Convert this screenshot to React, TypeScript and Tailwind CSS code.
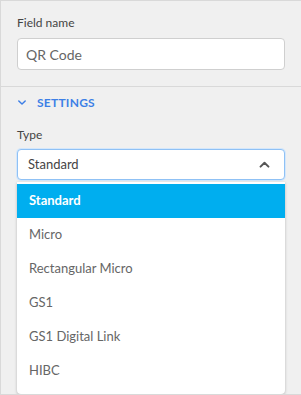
import React from 'react';

const options = ['Standard', 'Micro', 'Rectangular Micro', 'GS1', 'GS1 Digital Link', 'HIBC'];

const ChevronDown: React.FC<{ className?: string }> = ({ className }) => (
  <svg viewBox="0 0 10 6" className={className} fill="none" stroke="currentColor" strokeWidth="1.8" strokeLinecap="round" strokeLinejoin="round">
    <path d="M1 1l4 4 4-4" />
  </svg>
);

const ChevronUp: React.FC<{ className?: string }> = ({ className }) => (
  <svg viewBox="0 0 12 8" className={className} fill="none" stroke="currentColor" strokeWidth="2.2" strokeLinecap="round" strokeLinejoin="round">
    <path d="M1.5 6.5L6 2l4.5 4.5" />
  </svg>
);

const App: React.FC = () => {
  const selected = 'Standard';

  return (
    <div
      className="w-[301px] h-[395px] overflow-hidden bg-[#f0f0f0] border-l border-t border-b border-[#d9d9d9] text-[#4a4a4a]"
      style={{ fontFamily: 'Lato, "Open Sans", sans-serif' }}
    >
      {/* Field name */}
      <div className="pl-4 pr-4 pt-[14px] pb-4">
        <label className="block text-[12px] leading-4 text-[#444]">Field name</label>
        <div className="mt-[7px] h-[32px] w-[268px] rounded-[4px] border border-[#cfcfcf] bg-white flex items-center px-2">
          <span className="text-[14px] text-[#666]">QR Code</span>
        </div>
      </div>

      <div className="border-t border-[#d9d9d9]" />

      {/* Settings */}
      <div className="pl-4 pr-4">
        <div className="h-[31px] flex items-center gap-[7px]">
          <ChevronDown className="w-[8px] h-[5px] ml-[1px] text-[#3d7fe6]" />
          <span className="text-[12px] font-bold tracking-[0.02em] text-[#3d7fe6] ml-[4px]">SETTINGS</span>
        </div>

        <label className="block mt-[9px] text-[12px] leading-4 text-[#444]">Type</label>

        <div className="relative mt-[6px] w-[268px]">
          <div className="h-[31px] rounded-[4px] border border-[#8fc1f5] bg-white shadow-[0_0_0_1px_#d4e7fb] flex items-center justify-between pl-[10px] pr-[14px]">
            <span className="text-[13px] text-[#444]">Standard</span>
            <ChevronUp className="w-[11px] h-[7px] text-[#555]" />
          </div>

          <div className="mt-[2px] bg-white rounded-b-[4px] shadow-[0_1px_3px_rgba(0,0,0,0.25)] pt-[2px] pb-[6px]">
            {options.map((o) => (
              <div
                key={o}
                className={
                  o === selected
                    ? 'h-[34px] flex items-center px-3 bg-[#00aeef] text-white text-[13px] font-bold'
                    : 'h-[34px] flex items-center px-3 text-[#666] text-[13px]'
                }
              >
                {o}
              </div>
            ))}
          </div>
        </div>
      </div>
    </div>
  );
};

export default App;
